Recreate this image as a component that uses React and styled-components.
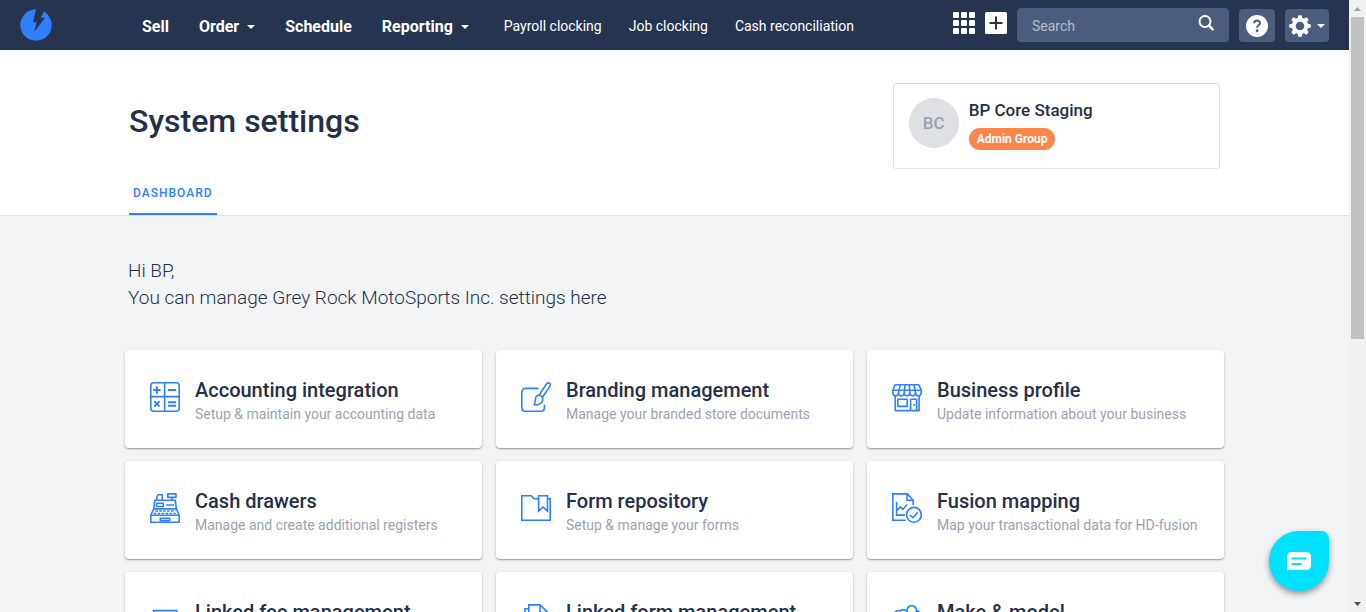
import React from "react";
import styled, { createGlobalStyle, css } from "styled-components";

const c = {
  navy: "#27344f",
  field: "#4c5c7d",
  blue: "#2f80ff",
  ink: "#243049",
  muted: "#9ba3b0",
  page: "#f3f4f6",
  line: "#dfe1e5",
  orange: "#ff854a",
  cyan: "#00e1ff",
};

const GlobalStyle = createGlobalStyle`
  *, *::before, *::after { box-sizing: border-box; }
  body {
    margin: 0;
    font-family: Roboto, "Liberation Sans", sans-serif;
    color: ${c.ink};
    background: ${c.page};
  }
  a { color: inherit; text-decoration: none; }
  button { font: inherit; border: 0; padding: 0; cursor: pointer; }
  svg { display: block; flex: none; }
`;

const Shell = styled.div`
  display: flex;
  height: 100vh;
`;

const Page = styled.div`
  flex: 1;
  min-width: 0;
  overflow: hidden;
`;

const TopBar = styled.header`
  display: flex;
  align-items: flex-start;
  height: 50px;
  padding: 8px 20px;
  background: ${c.navy};
  color: #fff;
`;

const Logo = styled.a`
  margin: 1px 90px 0 0;
`;

const Nav = styled.nav`
  display: flex;
  align-items: center;
  height: 38px;
  gap: 30px;
`;

const navText = css`
  display: flex;
  align-items: center;
  gap: 8px;
  background: none;
  color: #fff;
  white-space: nowrap;
  line-height: 20px;
`;

const MainLink = styled.a`
  ${navText}
  font-size: 16px;
  font-weight: 700;
`;

const MenuButton = styled.button`
  && {
    ${navText}
    font-size: 16px;
    font-weight: 700;
  }
`;

const SubNav = styled.div`
  display: flex;
  gap: 27px;
  padding: 0 0 2px 5px;
`;

const SubLink = styled.a`
  ${navText}
  font-size: 14px;
`;

const Caret = styled.span`
  border: 4px solid transparent;
  border-top-color: #fff;
  border-bottom: 0;
`;

const Tools = styled.div`
  display: flex;
  align-items: flex-end;
  gap: 10px;
  height: 34px;
  margin-left: auto;
`;

const IconButton = styled.button`
  align-self: flex-start;
  padding-top: 4px;
  background: none;
`;

const Search = styled.label`
  display: flex;
  align-items: center;
  width: 212px;
  height: 34px;
  padding: 0 15px;
  border-radius: 4px;
  background: ${c.field};

  input {
    flex: 1;
    min-width: 0;
    padding: 2px 0 0;
    border: 0;
    outline: 0;
    background: none;
    color: #fff;
    font: inherit;
    font-size: 14px;
  }
  input::placeholder { color: #b4bccb; opacity: 1; }
`;

const ToolButton = styled.button`
  display: flex;
  align-items: center;
  justify-content: center;
  gap: 6px;
  width: ${(p) => (p.$wide ? 44 : 36)}px;
  height: 33px;
  border-radius: 4px;
  background: ${c.field};
`;

const Container = styled.div`
  max-width: 1099px;
  margin: 0 auto;
`;

const Masthead = styled.section`
  padding-top: 33px;
  background: #fff;
  border-bottom: 1px solid ${c.line};
`;

const MastheadInner = styled(Container)`
  padding: 0 4px;
`;

const TitleRow = styled.div`
  display: flex;
  justify-content: space-between;
  align-items: flex-start;
`;

const Title = styled.h1`
  margin: 18px 0 0;
  font-size: 32px;
  line-height: 40px;
  font-weight: 500;
`;

const UserCard = styled.div`
  display: flex;
  gap: 10px;
  width: 30%;
  height: 86px;
  padding: 14px 15px;
  border: 1px solid ${c.line};
  border-radius: 3px;
`;

const Avatar = styled.div`
  display: grid;
  place-items: center;
  width: 50px;
  height: 50px;
  border-radius: 50%;
  background: #dfe0e4;
  color: #99a1b1;
  font-size: 17px;
  font-weight: 500;
`;

const UserName = styled.div`
  font-size: 17px;
  line-height: 24px;
  font-weight: 500;
  margin-bottom: 6px;
`;

const Badge = styled.span`
  display: inline-block;
  padding: 0 8px;
  border-radius: 11px;
  background: ${c.orange};
  color: #fff;
  font-size: 12px;
  line-height: 22px;
  font-weight: 700;
  vertical-align: top;
`;

const Tab = styled.a`
  display: inline-block;
  padding: 15px 4px 11px;
  border-bottom: 2px solid ${c.blue};
  font-size: 12px;
  line-height: 18px;
  font-weight: 500;
  letter-spacing: 1px;
  vertical-align: top;

  && { color: ${c.blue}; }
`;

const Content = styled.main`
  padding: 41px 0;
`;

const Greeting = styled.p`
  margin: 0 0 39px;
  padding-left: 3px;
  font-size: 19px;
  line-height: 27px;
  font-weight: 300;
`;

const Grid = styled.div`
  display: grid;
  grid-template-columns: repeat(3, 1fr);
  gap: 13px 14px;
`;

const Card = styled.a`
  display: flex;
  gap: 15px;
  height: 98px;
  padding: 27px 25px;
  border-radius: 4px;
  background: #fff;
  box-shadow: 0 1px 3px rgba(0, 0, 0, 0.22), 0 1px 1px rgba(0, 0, 0, 0.2);

  svg { margin-top: 5px; }
`;

const CardTitle = styled.h2`
  margin: 0;
  font-size: 20px;
  line-height: 26px;
  font-weight: 500;
`;

const CardText = styled.p`
  margin: 0;
  color: ${c.muted};
  font-size: 14px;
  line-height: 22px;
`;

const ChatButton = styled.button`
  position: fixed;
  right: 37px;
  bottom: 21px;
  display: grid;
  place-items: center;
  width: 60px;
  height: 60px;
  border-radius: 50% 8px 50% 50%;
  background: ${c.cyan};
  box-shadow: 0 3px 6px rgba(0, 0, 0, 0.4);
`;

const Rail = styled.div`
  display: flex;
  flex-direction: column;
  align-items: center;
  width: 17px;
  background: #f1f1f1;
`;

const RailArrow = styled.span`
  display: grid;
  place-items: center;
  width: 17px;
  height: 17px;
`;

const Thumb = styled.div`
  width: 13px;
  height: 322px;
  background: #c1c1c1;
  margin-bottom: auto;
`;

const CardIcon = ({ children }) => (
  <svg width="30" height="30" viewBox="0 0 30 30" fill="none" stroke={c.blue} strokeWidth="1.6" strokeLinejoin="round" aria-hidden="true">
    {children}
  </svg>
);

const icons = {
  accounting: (
    <>
      <rect x=".8" y=".8" width="28.4" height="28.4" rx="3" />
      <path d="M14.600.8v28.400M.8 14.600h28.400" />
      <path strokeWidth="1.900" d="M3.200 8h7.400M6.900 4.300v7.400M18 8h8M4.200 19.200l5.400 5.400m0-5.400l-5.400 5.400M18 20.300h8M18 23.700h8" />
    </>
  ),
  branding: (
    <>
      <path strokeLinecap="round" d="M16.800 6.400H4.600C2.300 6.400.8 8 .8 10.300v15.100c0 2.300 1.500 3.800 3.800 3.800h15c2.300 0 3.800-1.500 3.800-3.800V23.500" />
      <path d="M18 13.200L25.300 2.200c.8-1.200 2-1.700 3.100-1 1.100.7 1.100 2 .4 3.200L21.500 15.300" />
      <path d="M18 13.200c1.600 0 3 1 3.500 2.100 1 3.200-.8 6.700-4.400 7.300-1.400.2-2.800.1-4-.1 1.100-1.300 1-2.800 1.200-4.700.2-2.700 1.600-4.600 3.700-4.600z" />
    </>
  ),
  business: (
    <>
      <path d="M3.200 2.800h23.600l2.400 5.200v2.600c0 4.400-5.500 4.400-5.700 0 0 4.400-5.700 4.400-5.700 0 0 4.400-5.600 4.400-5.600 0 0 4.400-5.700 4.400-5.700 0-.2 4.400-5.700 4.400-5.700 0V8z" />
      <path d="M.8 8.200h28.400M8.200 2.800L6.500 10.600M13 2.800l-.7 7.800M17.300 2.800l.5 7.800M22 2.800l1.500 7.800M3.200 13.800v14.800h23.900V13.800" />
      <path d="M5.800 17.200h9.400v7.200H5.800zM18.600 28.500V17.200h6v11.300" />
      <circle cx="22.200" cy="22.900" r="1" fill={c.blue} stroke="none" />
    </>
  ),
  register: (
    <>
      <path d="M6.900 7.200V3.500L8.300 1.800h4v5.400M17.700.9h8.300v3.500h-8.300zM21.900 4.400v2.800" />
      <path d="M4.700 7.200h20.600l1 8.400 2.900 6.600v7H.8v-7l3.100-6.600zM3.800 15.900h22.500M.8 22.300h28.400" />
      <path d="M6.700 10.300h6.600v3.200H6.700zM16.200 12h8M10.300 27.600v-2.300h9.400v2.300z" />
      <path strokeWidth="1.500" strokeDasharray="2.500 1.400" d="M5.400 18.100h20M3.800 20.400h22.800" />
    </>
  ),
  forms: (
    <>
      <path strokeLinejoin="miter" d="M17.600 5.700h-4.400c-1.600 0-1.500-2.900-3.300-2.900H.8v24.400h28.400V5.700h-2.600" />
      <path strokeLinejoin="miter" d="M17.600 2.800h8.900v15.400L22 14l-4.400 4.200z" />
    </>
  ),
  fusion: (
    <>
      <path strokeLinejoin="miter" d="M13.800 27.300H.8V.9h14.600l5.700 6.400v4.900M15 1v6.300h6.200M4.600 8.700v13.400h8.500M4.600 17.800l3.800-3.900 2.400 2.500 4.300-5" />
      <circle cx="21.900" cy="21.800" r="7.400" />
      <path d="M17.800 22l3 2.700 5-5.500" />
    </>
  ),
  fees: <path d="M3.500 6.600h23.200v22H3.500zM8 12h14M8 17h14M8 22h8" />,
  linked: (
    <>
      <path strokeLinejoin="miter" d="M7.800 23V.9h11.200L26.800 8.500V23zM19 1v7.500h7.800" />
      <path strokeLinejoin="miter" d="M7.800 4.700H3.900v24.500h19V23" />
    </>
  ),
  models: (
    <path d="M8.400 6.900c2.300-1.800 4.700-.9 6.500.3.600-7.400 9-7.400 9.700-.3 2.600 0 4.400 2 4.400 4.600v11H1.500v-11c0-2.800 3.400-6 6.900-4.600zM15 7.200c1 4 8 4 9.600-.3" />
  ),
};

const cards = [
  ["accounting", "Accounting integration", "Setup & maintain your accounting data"],
  ["branding", "Branding management", "Manage your branded store documents"],
  ["business", "Business profile", "Update information about your business"],
  ["register", "Cash drawers", "Manage and create additional registers"],
  ["forms", "Form repository", "Setup & manage your forms"],
  ["fusion", "Fusion mapping", "Map your transactional data for HD-fusion"],
  ["fees", "Linked fee management", ""],
  ["linked", "Linked form management", ""],
  ["models", "Make & model", ""],
];

const gearTeeth = [0, 45, 90, 135, 180, 225, 270, 315];

export default function App() {
  return (
    <Shell>
      <GlobalStyle />
      <Page>
        <TopBar>
          <Logo href="#" aria-label="Home">
            <svg width="32" height="32" viewBox="0 0 32 32">
              <circle cx="16" cy="16" r="15.700" fill={c.blue} />
              <path fill={c.navy} d="M16.200-1L13 13.200h3.600L14.200 23 25 8.700h-4.200L24.600 1z" />
            </svg>
          </Logo>
          <Nav>
            <MainLink href="#">Sell</MainLink>
            <MenuButton type="button">Order<Caret /></MenuButton>
            <MainLink href="#">Schedule</MainLink>
            <MenuButton type="button">Reporting<Caret /></MenuButton>
            <SubNav>
              <SubLink href="#">Payroll clocking</SubLink>
              <SubLink href="#">Job clocking</SubLink>
              <SubLink href="#">Cash reconciliation</SubLink>
            </SubNav>
          </Nav>
          <Tools>
            <IconButton type="button" aria-label="Apps">
              <svg width="22" height="22" viewBox="0 0 22 22" fill="#fff">
                {[0, 8, 16].map((y) => [0, 8, 16].map((x) => (
                  <rect key={`${x}-${y}`} x={x} y={y} width="6" height="6" rx="1" />
                )))}
              </svg>
            </IconButton>
            <IconButton type="button" aria-label="Add">
              <svg width="22" height="22" viewBox="0 0 22 22">
                <rect width="22" height="22" rx="1.500" fill="#fff" />
                <path d="M11 4.500v13M4.500 11h13" stroke={c.navy} strokeWidth="2" />
              </svg>
            </IconButton>
            <Search>
              <input type="text" placeholder="Search" aria-label="Search" />
              <svg width="16" height="20" viewBox="0 0 16 20" fill="none" stroke="#fff" strokeWidth="2">
                <circle cx="7" cy="6.500" r="5.500" />
                <path d="M11 10.600l3.600 3.800" strokeWidth="2.500" strokeLinecap="round" />
              </svg>
            </Search>
            <ToolButton type="button" aria-label="Help">
              <svg width="22" height="22" viewBox="0 0 22 22">
                <circle cx="11" cy="11" r="11" fill="#fff" />
                <path d="M8.200 8.300c0-3.600 5.800-3.500 5.800-.2 0 2.300-2.900 2.100-2.900 4.700" fill="none" stroke={c.field} strokeWidth="2" />
                <circle cx="11.100" cy="15.700" r="1.400" fill={c.field} />
              </svg>
            </ToolButton>
            <ToolButton type="button" $wide aria-label="Settings">
              <svg width="22" height="22" viewBox="0 0 22 22">
                {gearTeeth.map((a) => (
                  <path key={a} d="M8.400 5L9.200.6Q11-.3 12.800.6L13.600 5z" fill="#fff" transform={`rotate(${a} 11 11)`} />
                ))}
                <circle cx="11" cy="11" r="6.300" fill="none" stroke="#fff" strokeWidth="4" />
              </svg>
              <Caret />
            </ToolButton>
          </Tools>
        </TopBar>

        <Masthead>
          <MastheadInner>
            <TitleRow>
              <Title>System settings</Title>
              <UserCard>
                <Avatar>BC</Avatar>
                <div>
                  <UserName>BP Core Staging</UserName>
                  <Badge>Admin Group</Badge>
                </div>
              </UserCard>
            </TitleRow>
            <Tab href="#">DASHBOARD</Tab>
          </MastheadInner>
        </Masthead>

        <Content>
          <Container>
            <Greeting>
              Hi BP,
              <br />
              You can manage Grey Rock MotoSports Inc. settings here
            </Greeting>
            <Grid>
              {cards.map(([icon, title, text]) => (
                <Card href="#" key={title}>
                  <CardIcon>{icons[icon]}</CardIcon>
                  <div>
                    <CardTitle>{title}</CardTitle>
                    {text && <CardText>{text}</CardText>}
                  </div>
                </Card>
              ))}
            </Grid>
          </Container>
        </Content>
      </Page>

      <Rail aria-hidden="true">
        <RailArrow>
          <svg width="7" height="4" viewBox="0 0 7 4"><path d="M0 4L3.500 0 7 4z" fill="#a3a3a3" /></svg>
        </RailArrow>
        <Thumb />
        <RailArrow>
          <svg width="7" height="4" viewBox="0 0 7 4"><path d="M0 0h7L3.500 4z" fill="#505050" /></svg>
        </RailArrow>
      </Rail>

      <ChatButton type="button" aria-label="Open chat">
        <svg width="24" height="18" viewBox="0 0 24 18">
          <path fill="#fff" d="M5 0h14q5 0 5 5v8q0 5-5 5H0V5q0-5 5-5z" />
          <path d="M4.500 6.500h15M4.500 12h10" stroke={c.cyan} strokeWidth="2" />
        </svg>
      </ChatButton>
    </Shell>
  );
}
